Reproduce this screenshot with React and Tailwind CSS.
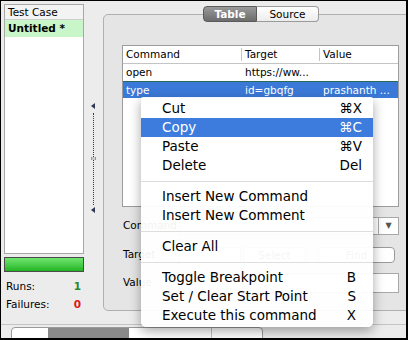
import React from "react";

function Splitter() {
    return (
        <div className="w-[19px] flex flex-col items-center pt-[102px]">
            <div className="w-0 h-0 border-y-[3px] border-y-transparent border-r-[4px] border-r-[#2f3656] ml-[-2px]"/>
            <div className="mt-[4px] h-[44px] border-l border-dotted border-[#2f3656]"/>
            <div className="w-[5px] h-[3px] border-x border-[#9a9a9a] bg-[#c8c8c8]"/>
            <div className="h-[45px] border-l border-dotted border-[#2f3656]"/>
            <div className="mt-[2px] w-0 h-0 border-y-[3px] border-y-transparent border-r-[4px] border-r-[#2f3656] ml-[-2px]"/>
        </div>
    );
}

function TestCasePanel() {
    return (
        <div className="w-[83px] pl-[3px] pt-[3px] flex flex-col text-[10.5px] text-black">
            <div className="h-[250px] bg-white border border-[#a8a8a8] flex flex-col">
                <div className="h-[15px] bg-[#f3f3f3] border-b border-[#cfcfcf] px-[3px] leading-[14px]">Test Case</div>
                <div className="h-[17px] bg-[#c9f6c9] px-[3px] font-bold leading-[17px]">Untitled *</div>
            </div>
            <div className="mt-[3px] h-[15px] w-[80px] border border-[#4a4a4a] bg-gradient-to-b from-[#6ee66e] to-[#1eb41e]"/>
            <div className="mt-[7px] flex justify-between pl-[2px] pr-[3px] leading-[14px]">
                <span>Runs:</span>
                <span className="text-[#2b8a2b] font-bold">1</span>
            </div>
            <div className="mt-[4px] flex justify-between pl-[2px] pr-[3px] leading-[14px]">
                <span>Failures:</span>
                <span className="text-[#e01818] font-bold">0</span>
            </div>
        </div>
    );
}

function CommandTable() {
    const rows = [
        {command: "open", target: "https://ww...", value: ""},
        {command: "type", target: "id=gbqfg", value: "prashanth ...", selected: true},
    ];
    return (
        <div className="h-[162px] w-[277px] bg-white border border-[#9c9c9c] text-[10.5px]">
            <div className="h-[18px] flex border-b border-[#c4c4c4] leading-[17px]">
                <div className="w-[118px] pl-[3px]">Command</div>
                <div className="w-[78px] pl-[3px] border-l border-[#c4c4c4] my-[2px] leading-[13px]">Target</div>
                <div className="flex-1 pl-[3px] border-l border-[#c4c4c4] my-[2px] leading-[13px]">Value</div>
            </div>
            {rows.map((row, index) => (
                <div
                    key={index}
                    className={`h-[17px] flex leading-[16px] ${
                        row.selected ? "bg-[#3b79d8] text-white border-t border-[#2c6a58]" : "text-black"
                    }`}
                >
                    <div className="w-[118px] pl-[3px]">{row.command}</div>
                    <div className="w-[78px] pl-[4px]">{row.target}</div>
                    <div className="flex-1 pl-[4px]">{row.value}</div>
                </div>
            ))}
        </div>
    );
}

function EditorPanel() {
    return (
        <div className="flex-1 flex flex-col pt-[5px] text-[10.5px]">
            {/* Tabs */}
            <div className="flex pl-[100px] -mb-[8px] relative z-10">
                <div className="w-[54px] h-[16px] rounded-l-[4px] border border-[#5a5a5a] bg-gradient-to-b from-[#9a9a9a] to-[#6c6c6c] text-white font-bold text-center leading-[14px]">
                    Table
                </div>
                <div className="w-[62px] h-[16px] rounded-r-[4px] border border-l-0 border-[#9a9a9a] bg-gradient-to-b from-white to-[#ececec] text-black text-center leading-[14px]">
                    Source
                </div>
            </div>

            {/* Panel */}
            <div className="h-[297px] mr-[-12px] border border-[#b0b0b0] rounded-[5px] bg-[#e5e5e5] pt-[30px] pl-[18px]">
                <CommandTable/>

                <div className="mt-[10px] h-[18px] flex items-center w-[277px]">
                    <span className="w-[57px] pl-[1px]">Command</span>
                    <div className="flex-1 h-[18px] bg-white border border-[#a8a8a8]"/>
                    <div className="w-[20px] h-[18px] bg-white border border-l-0 border-[#a8a8a8] flex items-center justify-center text-[8px] text-[#555]">▼</div>
                </div>

                <div className="mt-[12px] h-[16px] flex items-center w-[277px]">
                    <span className="w-[57px] pl-[1px]">Target</span>
                    <div className="w-[62px] h-[16px] bg-white border border-[#a8a8a8]"/>
                    <div className="ml-[2px] w-[63px] h-[16px] rounded-[4px] border border-[#9a9a9a] bg-white text-center leading-[14px] text-[#333]">Select</div>
                    <div className="ml-[12px] w-[77px] h-[16px] rounded-[4px] border border-[#9a9a9a] bg-white text-center leading-[14px] text-[#333]">Find</div>
                </div>

                <div className="mt-[10px] h-[20px] flex items-center w-[277px]">
                    <span className="w-[57px] pl-[1px]">Value</span>
                    <div className="flex-1 h-[20px] bg-white border border-[#a8a8a8]"/>
                </div>
            </div>
        </div>
    );
}

function ContextMenu() {
    const groups = [
        [
            {label: "Cut", key: "⌘X"},
            {label: "Copy", key: "⌘C", active: true},
            {label: "Paste", key: "⌘V"},
            {label: "Delete", key: "Del"},
        ],
        [
            {label: "Insert New Command"},
            {label: "Insert New Comment"},
        ],
        [{label: "Clear All"}],
        [
            {label: "Toggle Breakpoint", key: "B", narrow: true},
            {label: "Set / Clear Start Point", key: "S", narrow: true},
            {label: "Execute this command", key: "X", narrow: true},
        ],
    ];
    return (
        <div className="absolute left-[140px] top-[96px] w-[232px] bg-white/95 rounded-b-[5px] rounded-t-[2px] shadow-[0_4px_12px_rgba(0,0,0,0.35)] pt-[2px] pb-[2px] text-[13.5px] text-black z-20">
            {groups.map((group, gi) => (
                <div key={gi}>
                    {gi > 0 && <div className="mt-[6px] mb-[5px] h-px bg-[#dedede]"/>}
                    {group.map((item) => (
                        <div
                            key={item.label}
                            className={`h-[19px] flex items-center justify-between pl-[21px] leading-[19px] ${
                                item.narrow ? "pr-[17px]" : "pr-[11px]"
                            } ${item.active ? "bg-[#3d7cdc] text-white" : ""}`}
                        >
                            <span>{item.label}</span>
                            {item.key && <span>{item.key}</span>}
                        </div>
                    ))}
                </div>
            ))}
        </div>
    );
}

export default function App() {
    return (
        <div className="w-[408px] h-[340px] relative overflow-hidden bg-[#ececec] border-l border-t border-r-2 border-b-2 border-black flex flex-col font-['DejaVu_Sans',sans-serif]">
            <div className="h-[314px] flex">
                <TestCasePanel/>
                <Splitter/>
                <EditorPanel/>
            </div>

            {/* Bottom strip */}
            <div className="flex-1 border-t border-[#c4c4c4] mt-[13px] pt-[2px] pl-[10px]">
                <div className="w-[252px] h-[14px] rounded-t-[4px] border border-[#9a9a9a] bg-white flex">
                    <div className="ml-[36px] w-[81px] bg-[#8a8a8a]"/>
                    <div className="ml-[82px] w-px bg-[#c0c0c0]"/>
                </div>
            </div>

            <ContextMenu/>
        </div>
    );
}
